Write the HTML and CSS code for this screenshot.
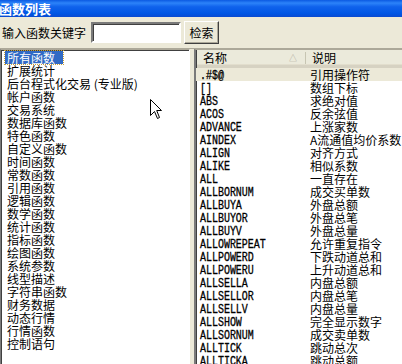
FILE: index.html
```html
<!DOCTYPE html>
<html lang="zh-CN">
<head>
    <meta charset="UTF-8">
    <title>函数列表</title>
    <link rel="stylesheet" href="styles.css">
</head>
<body>
    <div class="titlebar">函数列表</div>
    <div class="toolbar">
        <label for="kw">输入函数关键字</label>
        <input type="text" id="kw" class="kw">
        <button class="btn">检索</button>
    </div>
    <div class="panes">
        <ul class="catlist">
            <li class="sel"><span>所有函数</span></li>
            <li>扩展统计</li>
            <li>后台程式化交易 (专业版)</li>
            <li>帐户函数</li>
            <li>交易系统</li>
            <li>数据库函数</li>
            <li>特色函数</li>
            <li>自定义函数</li>
            <li>时间函数</li>
            <li>常数函数</li>
            <li>引用函数</li>
            <li>逻辑函数</li>
            <li>数学函数</li>
            <li>统计函数</li>
            <li>指标函数</li>
            <li>绘图函数</li>
            <li>系统参数</li>
            <li>线型描述</li>
            <li>字符串函数</li>
            <li>财务数据</li>
            <li>动态行情</li>
            <li>行情函数</li>
            <li>控制语句</li>
        </ul>
        <div class="funclist">
            <div class="head">
                <div class="col-name">名称<span class="arrow">&#9651;</span></div>
                <div class="col-desc">说明</div>
            </div>
            <div class="row sel"><span class="name"><i>.#$@</i></span><span class="desc">引用操作符</span></div>
            <div class="row"><span class="name"><i>[]</i></span><span class="desc">数组下标</span></div>
            <div class="row"><span class="name"><i>ABS</i></span><span class="desc">求绝对值</span></div>
            <div class="row"><span class="name"><i>ACOS</i></span><span class="desc">反余弦值</span></div>
            <div class="row"><span class="name"><i>ADVANCE</i></span><span class="desc">上涨家数</span></div>
            <div class="row"><span class="name"><i>AINDEX</i></span><span class="desc">A流通值均价系数</span></div>
            <div class="row"><span class="name"><i>ALIGN</i></span><span class="desc">对齐方式</span></div>
            <div class="row"><span class="name"><i>ALIKE</i></span><span class="desc">相似系数</span></div>
            <div class="row"><span class="name"><i>ALL</i></span><span class="desc">一直存在</span></div>
            <div class="row"><span class="name"><i>ALLBORNUM</i></span><span class="desc">成交买单数</span></div>
            <div class="row"><span class="name"><i>ALLBUYA</i></span><span class="desc">外盘总额</span></div>
            <div class="row"><span class="name"><i>ALLBUYOR</i></span><span class="desc">外盘总笔</span></div>
            <div class="row"><span class="name"><i>ALLBUYV</i></span><span class="desc">外盘总量</span></div>
            <div class="row"><span class="name"><i>ALLOWREPEAT</i></span><span class="desc">允许重复指令</span></div>
            <div class="row"><span class="name"><i>ALLPOWERD</i></span><span class="desc">下跌动道总和</span></div>
            <div class="row"><span class="name"><i>ALLPOWERU</i></span><span class="desc">上升动道总和</span></div>
            <div class="row"><span class="name"><i>ALLSELLA</i></span><span class="desc">内盘总额</span></div>
            <div class="row"><span class="name"><i>ALLSELLOR</i></span><span class="desc">内盘总笔</span></div>
            <div class="row"><span class="name"><i>ALLSELLV</i></span><span class="desc">内盘总量</span></div>
            <div class="row"><span class="name"><i>ALLSHOW</i></span><span class="desc">完全显示数字</span></div>
            <div class="row"><span class="name"><i>ALLSORNUM</i></span><span class="desc">成交卖单数</span></div>
            <div class="row"><span class="name"><i>ALLTICK</i></span><span class="desc">跳动总次</span></div>
            <div class="row"><span class="name"><i>ALLTICKA</i></span><span class="desc">跳动总额</span></div>
        </div>
    </div>
    <svg class="cursor" width="13" height="21" viewBox="0 0 13 21">
        <path d="M0.5 0.5 L0.5 16.5 L4.5 12.5 L7.5 19.5 L9.5 18.5 L6.7 11.5 L11.5 11.5 Z" fill="#fff" stroke="#000" stroke-width="1"/>
    </svg>
</body>
</html>
```

FILE: styles.css
```css
body {
    margin: 0;
    width: 402px;
    height: 364px;
    overflow: hidden;
    position: relative;
    background: #ece9d8;
    font-family: "Noto Sans CJK SC", "DejaVu Sans", sans-serif;
    font-size: 12px;
    color: #000;
}
.titlebar {
    height: 17px;
    line-height: 17px;
    margin-left: -1px;
    color: #fff;
    font-weight: bold;
    font-size: 13px;
    background: linear-gradient(#0b5ae2, #2c83f9 18%, #0f62ec 40%, #0056e4 80%, #0a4ad0);
}
.toolbar {
    height: 31px;
    display: flex;
    align-items: center;
    padding-left: 2px;
}
.toolbar label {
    width: 89px;
}
.kw {
    box-sizing: border-box;
    width: 90px;
    height: 21px;
    margin: 0;
    padding: 0 2px;
    border: 2px solid;
    border-color: #7a7a7a #fff #fff #7a7a7a;
    box-shadow: inset 1px 1px 0 #404040;
    background: #fff;
    outline: none;
}
.btn {
    box-sizing: border-box;
    margin-left: 3px;
    width: 35px;
    height: 23px;
    padding: 0;
    font-family: inherit;
    font-size: 12px;
    background: #ece9d8;
    border: 1px solid;
    border-color: #fff #404040 #404040 #fff;
    box-shadow: inset -1px -1px 0 #aca899;
}
.panes {
    display: flex;
    gap: 4px;
    height: 316px;
    border-top: 1px solid #aca899;
}
.catlist {
    box-sizing: border-box;
    list-style: none;
    margin: 0;
    padding: 1px 0 0 4px;
    width: 190px;
    flex: none;
    background: #fff;
    border: 1px solid;
    border-color: #aca899 #fff #fff #7a7a7a;
    box-shadow: inset 1px 1px 0 #404040;
    overflow: hidden;
}
.catlist li {
    height: 13px;
    line-height: 13px;
    white-space: nowrap;
    padding-left: 2px;
}
.catlist li.sel span {
    display: inline-block;
    background: #316ac5;
    color: #fff;
    outline: 1px dotted #c9a13a;
    margin-left: -2px;
    padding: 0 8px 0 2px;
}
.funclist {
    flex: 1;
    min-width: 0;
    background: #fff;
    border-left: 2px solid #7a7a7a;
    border-top: 1px solid #aca899;
    box-shadow: inset 1px 1px 0 #404040;
    overflow: hidden;
}
.head {
    display: flex;
    height: 18px;
    line-height: 15px;
    background: #ebeadb;
    border-bottom: 3px solid #d6d2c2;
    box-sizing: border-box;
    box-shadow: inset 0 -1px 0 #e2decd;
    margin-left: 1px;
}
.col-name {
    position: relative;
    width: 109px;
    padding-left: 6px;
    box-sizing: border-box;
    border-right: 1px solid #c7c5b2;
    margin: 2px 0 1px;
    line-height: 12px;
}
.col-name .arrow {
    position: absolute;
    right: 8px;
    top: 0;
    font-size: 8px;
    color: #aca899;
}
.col-desc {
    padding-left: 6px;
}
.row {
    display: flex;
    height: 13px;
    line-height: 13px;
    white-space: nowrap;
}
.row.sel {
    background: #ece9d8;
}
.name {
    width: 110px;
    height: 13px;
    flex: none;
    padding: 2px 0 0 4px;
    box-sizing: border-box;
    font-family: "Liberation Mono", monospace;
    font-size: 12px;
    line-height: 13px;
}
.name i {
    display: inline-block;
    vertical-align: top;
    font-style: normal;
    transform: scaleX(0.83);
    transform-origin: left center;
    -webkit-text-stroke: 0.3px #000;
}
.desc {
    padding-left: 4px;
}
.cursor {
    position: absolute;
    left: 150px;
    top: 99px;
}
```
